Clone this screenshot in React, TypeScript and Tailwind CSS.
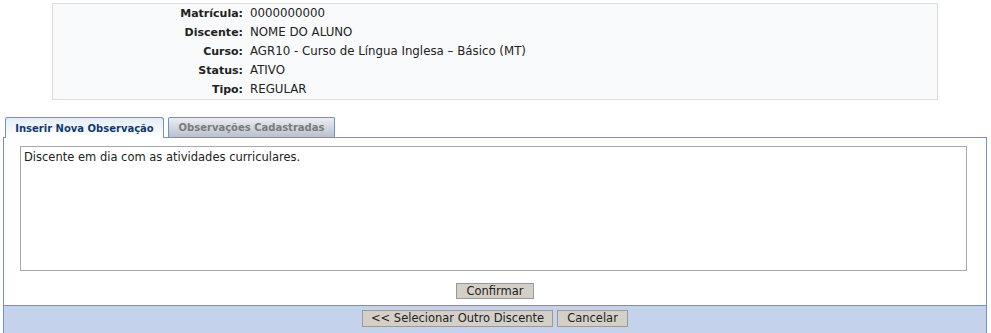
export default function App() {
    const rows = [
        { label: "Matrícula:", value: "0000000000" },
        { label: "Discente:", value: "NOME DO ALUNO" },
        { label: "Curso:", value: "AGR10 - Curso de Língua Inglesa – Básico (MT)" },
        { label: "Status:", value: "ATIVO" },
        { label: "Tipo:", value: "REGULAR" },
    ];

    return (
        <main className="w-[991px] h-[333px] bg-white text-[11px] text-[#222] font-['DejaVu_Sans',Verdana,sans-serif] overflow-hidden">
            <div className="pt-[3px] pl-[52px]">
                <div className="w-[886px] h-[97px] border border-[#dcdcdc] bg-[#f9fafc]">
                    {rows.map((r) => (
                        <div key={r.label} className="grid grid-cols-[190px_1fr] gap-x-[7px] h-[19px] leading-[19px]">
                            <span className="text-right font-bold text-[11px]">{r.label}</span>
                            <span className="text-[11.8px]">{r.value}</span>
                        </div>
                    ))}
                </div>
            </div>

            <div className="mt-[17px] ml-[3px] w-[984px]">
                <div className="flex items-end gap-[4px] pl-[2px] h-[20px]">
                    <div className="relative -mb-px h-[21px] w-[159px] rounded-t-[3px] border border-b-0 border-[#6d93c9] bg-gradient-to-b from-[#e6edf7] to-white z-10 flex items-center justify-center font-bold text-[10px] text-[#0e3a6e]">
                        Inserir Nova Observação
                    </div>
                    <div className="h-[20px] w-[167px] rounded-t-[2px] border border-b-0 border-[#6d93c9] bg-gradient-to-b from-[#eceef2] to-[#b9c1cd] flex items-center justify-center font-bold text-[10px] text-[#7a7a7a]">
                        Observações Cadastradas
                    </div>
                </div>
                <div className="border-x border-t border-[#6d93c9]">
                    <div className="pt-[8px] pl-[16px]">
                        <div className="w-[947px] h-[125px] border border-[#a8a8a8] px-[3px] py-[3px] leading-[14px] text-[11.5px]">
                            Discente em dia com as atividades curriculares.
                        </div>
                    </div>
                    <div className="flex justify-center pt-[12px] pb-[6px]">
                        <button className="h-[16px] w-[78px] border border-[#9a9a9a] bg-[#d4d0c8] leading-[14px] text-[11.5px]">
                            Confirmar
                        </button>
                    </div>
                    <div className="h-[30px] border-t border-[#6d93c9] bg-[#c4d2eb] flex justify-center gap-[4px] pt-[4px]">
                        <button className="h-[17px] w-[191px] border border-[#9a9a9a] bg-[#d4d0c8] leading-[15px] text-[11.5px]">
                            &lt;&lt; Selecionar Outro Discente
                        </button>
                        <button className="h-[17px] w-[71px] border border-[#9a9a9a] bg-[#d4d0c8] leading-[15px] text-[11.5px]">
                            Cancelar
                        </button>
                    </div>
                </div>
            </div>
        </main>
    );
}
